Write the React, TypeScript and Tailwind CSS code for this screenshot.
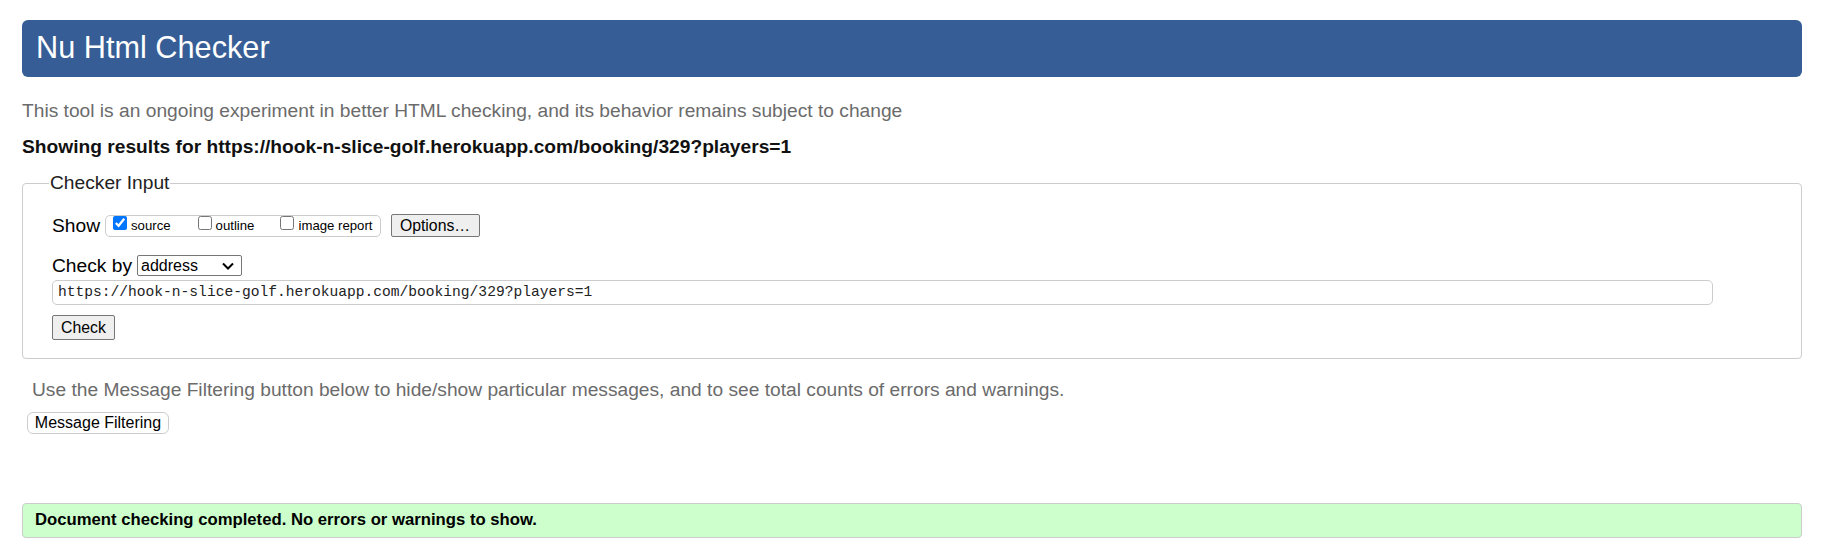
import React from "react";

export default function App() {
  return (
    <div className="min-h-[546px] bg-white pl-[22px] pr-[20px] pt-[20px] font-['Liberation_Sans',Arial,sans-serif] text-black">
      <div className="flex h-[57px] items-center rounded-[6px] bg-[#365d95] pl-[14px]">
        <h1 className="text-[30.7px] leading-none text-white">Nu Html Checker</h1>
      </div>

      <p className="mt-[23px] text-[19.2px] leading-[22px] text-[#6b6b6b]">
        This tool is an ongoing experiment in better HTML checking, and its behavior remains subject to change
      </p>
      <p className="mt-[14px] text-[19.2px] font-bold leading-[22px] text-[#111]">
        Showing results for https://hook-n-slice-golf.herokuapp.com/booking/329?players=1
      </p>

      <fieldset className="mt-[14px] rounded-[4px] border border-[#cccccc] pb-[18px] pl-[26px]">
        <legend className="px-[1px] text-[19.2px] leading-[22px] text-[#222]">Checker Input</legend>
        <div className="ml-[3px]">
          <div className="mt-[20px] flex h-[23px] items-center">
            <span className="text-[19.2px] leading-[22px]">Show</span>
            <div className="ml-[5px] flex h-[22px] items-start rounded-[5px] border border-[#cccccc] pl-[7px] pr-[7px]">
              <label className="flex items-start">
                <input type="checkbox" defaultChecked className="m-0 h-[14px] w-[14px] accent-[#0075ff]" />
                <span className="ml-[4px] mt-[2px] text-[13.2px] leading-[15px]">source</span>
              </label>
              <label className="ml-[27px] flex items-start">
                <input type="checkbox" className="m-0 h-[14px] w-[14px]" />
                <span className="ml-[4px] mt-[2px] text-[13.2px] leading-[15px]">outline</span>
              </label>
              <label className="ml-[26px] flex items-start">
                <input type="checkbox" className="m-0 h-[14px] w-[14px]" />
                <span className="ml-[4px] mt-[2px] text-[13.2px] leading-[15px]">image report</span>
              </label>
            </div>
            <button className="ml-[10px] flex h-[23px] w-[89px] items-center justify-center rounded-[2px] border border-[#767676] bg-[#efefef] text-[15.8px] leading-none">
              Options…
            </button>
          </div>

          <div className="mt-[18px] flex h-[21px] items-center">
            <span className="text-[19.2px] leading-[22px]">Check by</span>
            <div className="ml-[5px] flex h-[21px] w-[105px] items-center justify-between rounded-[2px] border border-[#767676] pl-[3px] pr-[7px]">
              <span className="text-[16px] leading-none">address</span>
              <svg width="12" height="8" viewBox="0 0 12 8" className="mt-[1px]">
                <path d="M1 1.5 L6 6.5 L11 1.5" fill="none" stroke="#000" strokeWidth="2" />
              </svg>
            </div>
          </div>

          <div className="mt-[4px] flex h-[25px] w-[1661px] items-center rounded-[5px] border border-[#cccccc] pl-[5px]">
            <span className="font-['Liberation_Mono',monospace] text-[14.6px] leading-none text-[#222]">
              https://hook-n-slice-golf.herokuapp.com/booking/329?players=1
            </span>
          </div>

          <button className="mt-[10px] flex h-[25px] w-[63px] items-center justify-center rounded-[2px] border border-[#767676] bg-[#efefef] text-[15.8px] leading-none">
            Check
          </button>
        </div>
      </fieldset>

      <p className="ml-[10px] mt-[20px] text-[19.2px] leading-[22px] text-[#6b6b6b]">
        Use the Message Filtering button below to hide/show particular messages, and to see total counts of errors and warnings.
      </p>
      <button className="ml-[5px] mt-[11px] flex h-[22px] w-[142px] items-center justify-center rounded-[6px] border border-[#cccccc] bg-white text-[16px] leading-none">
        Message Filtering
      </button>

      <div className="mt-[69px] flex h-[35px] items-center rounded-[4px] border border-[#cccccc] bg-[#ccffcc] pl-[12px]">
        <span className="text-[16.7px] font-bold leading-none">Document checking completed. No errors or warnings to show.</span>
      </div>
    </div>
  );
}
